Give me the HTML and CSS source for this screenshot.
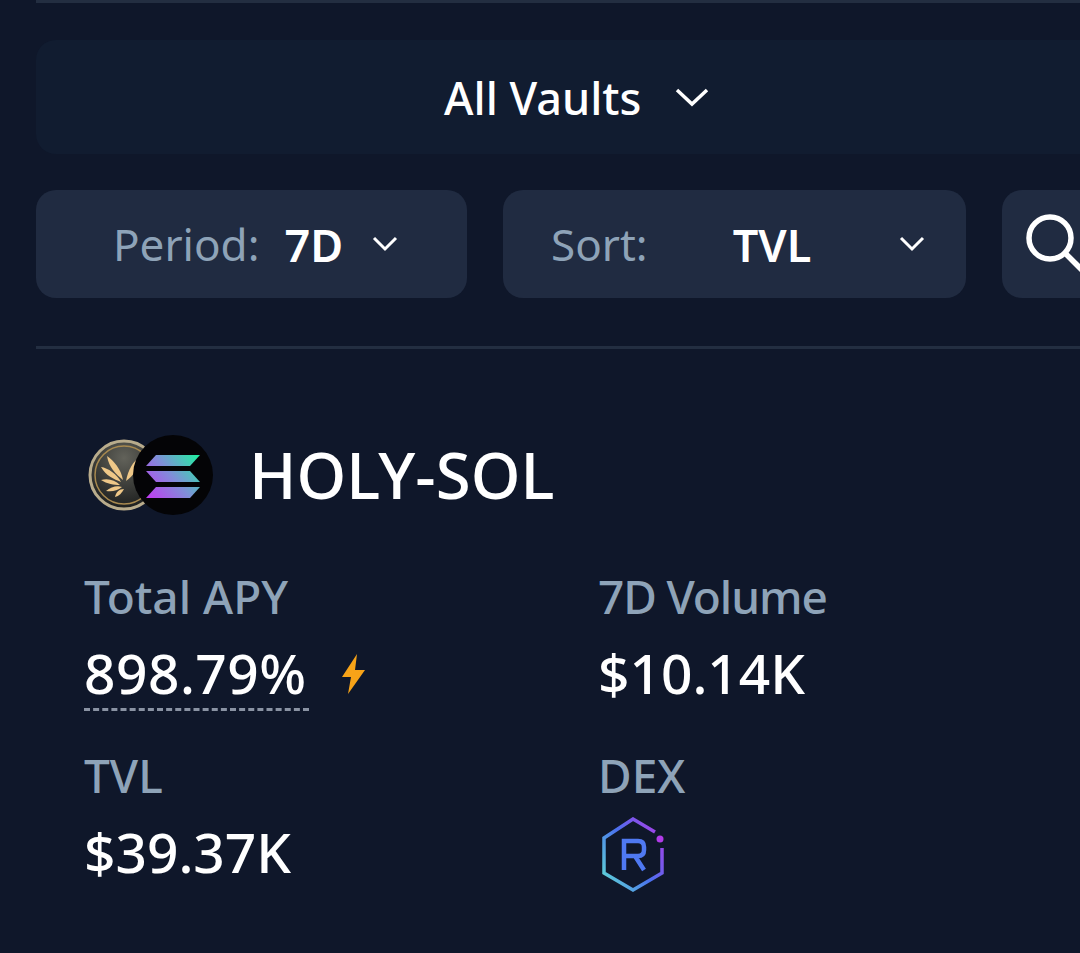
FILE: index.html
```html
<!DOCTYPE html>
<html lang="en">
<head>
<meta charset="utf-8">
<title>Vaults</title>
<link rel="stylesheet" href="styles.css">
</head>
<body>
<div class="page">
  <div class="rule-top"></div>
  <button class="all-vaults">
    <span>All Vaults</span>
    <svg class="chev-lg" viewBox="0 0 34 20"><path d="M2 3 L17 17 L32 3"/></svg>
  </button>
  <div class="filters">
    <div class="select period">
      <span class="select-label">Period:</span>
      <span class="select-value">7D</span>
      <svg class="chev" viewBox="0 0 26 16"><path d="M2 2 L13 13 L24 2"/></svg>
    </div>
    <div class="select sort">
      <span class="select-label">Sort:</span>
      <span class="select-value">TVL</span>
      <svg class="chev" viewBox="0 0 26 16"><path d="M2 2 L13 13 L24 2"/></svg>
    </div>
    <div class="search">
      <svg class="search-icon" viewBox="0 0 60 60"><circle cx="24" cy="24" r="21"/><path d="M39 39 L62 62"/></svg>
    </div>
  </div>
  <div class="rule"></div>
  <section class="vault">
    <div class="vault-head">
      <div class="coins">
        <svg class="coin-holy" viewBox="0 0 72 72">
          <defs>
            <radialGradient id="holybg" cx="50%" cy="25%" r="75%"><stop offset="0" stop-color="#62625a"/><stop offset="1" stop-color="#1c1e1e"/></radialGradient>
          </defs>
          <circle cx="36" cy="36" r="34" fill="url(#holybg)" stroke="#b9ac8c" stroke-width="3"/>
          <circle cx="36" cy="36" r="29" fill="none" stroke="#a8894f" stroke-width="1.500"/>
          <g fill="#efc888">
            <path d="M35 41 C28 35 21 29 19 17 C26 22 33 30 35 41Z"/>
            <path d="M33 43 C26 40 18 37 13 28 C20 29 29 35 33 43Z"/>
            <path d="M32 46 C26 46 19 45 13 41 C20 39 27 41 32 46Z"/>
            <path d="M34 48 C29 52 24 53 18 52 C23 48 29 46 34 48Z"/>
            <path d="M36 50 C34 54 31 57 27 58 C28 53 31 50 36 50Z"/>
            <path d="M38 42 C46 36 50 30 52 18 C45 22 40 31 38 42Z"/>
          </g>
        </svg>
        <svg class="coin-sol" viewBox="0 0 80 80">
          <defs>
            <linearGradient id="solg" gradientUnits="userSpaceOnUse" x1="14" y1="63" x2="66" y2="20"><stop offset="0" stop-color="#c23af2"/><stop offset=".5" stop-color="#7f8fd8"/><stop offset="1" stop-color="#1ff2a0"/></linearGradient>
          </defs>
          <circle cx="40" cy="40" r="40" fill="#040406"/>
          <g fill="url(#solg)">
            <path d="M23 20 H67 L57 31 H13Z"/>
            <path d="M13 36 H57 L67 47 H23Z"/>
            <path d="M23 52 H67 L57 63 H13Z"/>
          </g>
        </svg>
      </div>
      <h2 class="vault-name">HOLY-SOL</h2>
    </div>
    <div class="stats">
      <div class="stat">
        <div class="stat-label">Total APY</div>
        <div class="stat-value apy-row">
          <span class="apy">898.79%</span>
          <svg class="bolt" viewBox="0 0 26 42"><path d="M17 1 L2 24 H11 L8 41 L25 17 H15Z"/></svg>
        </div>
      </div>
      <div class="stat">
        <div class="stat-label tight">7D Volume</div>
        <div class="stat-value">$10.14K</div>
      </div>
      <div class="stat">
        <div class="stat-label">TVL</div>
        <div class="stat-value">$39.37K</div>
      </div>
      <div class="stat">
        <div class="stat-label">DEX</div>
        <svg class="raydium" viewBox="0 0 64 76">
          <defs>
            <linearGradient id="rayg" x1="0%" y1="90%" x2="100%" y2="10%"><stop offset="0" stop-color="#5fd6d6"/><stop offset=".5" stop-color="#4a70ee"/><stop offset="1" stop-color="#b13be8"/></linearGradient>
          </defs>
          <path d="M54 15 L32 2 L3 21 V56 L32 73 L61 56 V31" fill="none" stroke="url(#rayg)" stroke-width="3.500"/>
          <circle cx="59" cy="22" r="3.500" fill="#b13be8"/>
          <path d="M23 53 V24 H37 Q43 24 43 30 V33 Q43 39 37 39 H23 M34 39 L43 53" fill="none" stroke="#4f79f2" stroke-width="4.500"/>
        </svg>
      </div>
    </div>
  </section>
</div>
</body>
</html>
```
FILE: styles.css
```css
* { box-sizing: border-box; }
html, body { margin: 0; height: 100%; }
body {
  background: #0f172a;
  color: #fff;
  font-family: "Noto Sans", "Liberation Sans", sans-serif;
}
.page { width: 1080px; height: 953px; padding-left: 36px; overflow: hidden; }
.rule-top { height: 3px; background: #232e41; }
.all-vaults {
  display: flex;
  width: 100%;
  height: 114px;
  margin-top: 37px;
  padding: 0 0 0 408px;
  align-items: center;
  gap: 34px;
  border: 0;
  border-radius: 20px 0 0 20px;
  background: #111c30;
  color: #fff;
  font: 500 45px "Noto Sans", sans-serif;
}
.chev-lg { width: 34px; height: 20px; }
.chev-lg path { fill: none; stroke: #fff; stroke-width: 3.500; }
.chev path { fill: none; stroke: #fff; stroke-width: 3; }
.filters { display: flex; gap: 36px; margin-top: 36px; }
.select, .search {
  display: flex;
  flex: none;
  align-items: center;
  height: 108px;
  border-radius: 20px;
  background: #202b41;
}
.select { font-size: 44px; }
.period { width: 431px; padding-left: 77px; }
.sort { width: 463px; padding-left: 48px; }
.select-label { color: #8ea3b8; }
.select-value { font-size: 45px; font-weight: 600; }
.period .select-value { margin-left: 25px; }
.sort .select-value { margin-left: 85px; }
.chev { width: 26px; height: 16px; margin-left: 29px; }
.sort .chev { margin-left: 88px; }
.search {
  width: 78px;
  padding: 24px 0 0 24px;
  align-items: flex-start;
  border-radius: 20px 0 0 20px;
  overflow: hidden;
}
.search-icon { width: 60px; height: 60px; flex: none; overflow: visible; }
.search-icon circle, .search-icon path { fill: none; stroke: #fff; stroke-width: 5.500; }
.rule { height: 3px; margin-top: 48px; background: #232e41; }
.vault { padding: 85px 0 0 48px; }
.vault-head { display: flex; align-items: center; height: 82px; }
.coins { display: flex; width: 165px; padding-left: 4px; }
.coin-holy { width: 72px; height: 72px; flex: none; margin-top: 4px; }
.coin-sol { width: 80px; height: 80px; flex: none; margin-left: -27px; }
.vault-name { margin: 0; font-size: 63.500px; font-weight: 500; line-height: 82px; }
.stats {
  display: grid;
  grid-template-columns: 514px 1fr;
  grid-auto-rows: 179px;
  margin-top: 50px;
}
.stat-label { color: #8ea3b8; font-size: 46px; font-weight: 500; line-height: 60px; }
.stat-label.tight { letter-spacing: -1.100px; }
.stat-value { font-size: 55px; font-weight: 500; line-height: 70px; margin-top: 12px; }
.apy-row { display: flex; align-items: flex-start; gap: 31px; }
.apy { display: block; height: 73px; padding-right: 2px; border-bottom: 3px dashed #8a93a3; letter-spacing: 0.500px; }
.bolt { width: 26px; height: 42px; margin-top: 15px; fill: #f7a318; }
.raydium { display: block; width: 64px; height: 76px; margin: 12px 0 0 3px; }
```
